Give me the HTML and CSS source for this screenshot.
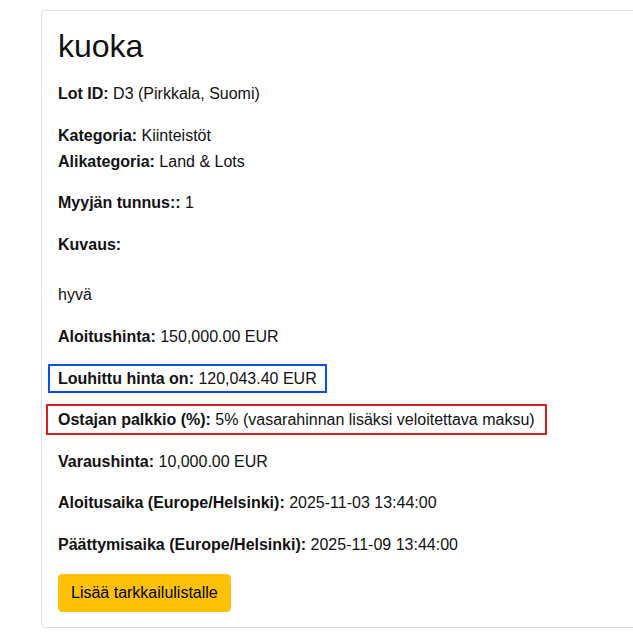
FILE: index.html
```html
<!DOCTYPE html>
<html lang="fi">
  <head>
    <meta charset="UTF-8" />
    <meta name="viewport" content="width=device-width, initial-scale=1.0" />
    <title>kuoka</title>
    <link rel="stylesheet" href="styles.css">
  </head>
  <body>
    <div class="page">
      <div class="lot-card">
        <h1 class="lot-title">kuoka</h1>

        <p><strong>Lot ID:</strong> D3 (Pirkkala, Suomi)</p>

        <p>
          <strong>Kategoria:</strong> Kiinteistöt<br />
          <strong>Alikategoria:</strong> Land &amp; Lots
        </p>

        <p><strong>Myyjän tunnus::</strong> 1</p>

        <p><strong>Kuvaus:</strong></p>
        <div class="description">
          <p>hyvä</p>
        </div>

        <p><strong>Aloitushinta:</strong> 150,000.00 EUR</p>

        <p>
          <span class="hammer-price"><strong>Louhittu hinta on:</strong> 120,043.40 EUR</span>
        </p>

        <p>
          <span class="buyer-fee"><strong>Ostajan palkkio (%):</strong> 5% (vasarahinnan lisäksi veloitettava maksu)</span>
        </p>

        <p><strong>Varaushinta:</strong> 10,000.00 EUR</p>

        <p><strong>Aloitusaika (Europe/Helsinki):</strong> 2025-11-03 13:44:00</p>

        <p><strong>Päättymisaika (Europe/Helsinki):</strong> 2025-11-09 13:44:00</p>

        <button class="watch-btn" type="button">Lisää tarkkailulistalle</button>
      </div>
    </div>
  </body>
</html>
```

FILE: styles.css
```css
html,
body {
  margin: 0;
  overflow: hidden;
}

body {
  font-family: "Liberation Sans", Arial, Helvetica, sans-serif;
  font-size: 16px;
  line-height: 1.6;
  color: #111;
  background: #fff;
}

.page {
  padding: 10px 0 0 41px;
}

.lot-card {
  width: 700px;
  padding: 16px 16px 15px;
  border: 1px solid #dee2e6;
  border-radius: 4px;
}

.lot-title {
  margin: 0 0 16px;
  font-size: 32px;
  font-weight: 400;
  line-height: 1.2;
}

p {
  margin: 0 0 16px;
}

strong {
  font-weight: 700;
}

.description {
  padding-top: 9px;
}

.hammer-price {
  margin-left: -10px;
  padding: 4px 8px;
  border: 2px solid #0a52de;
}

.buyer-fee {
  margin-left: -12px;
  padding: 5px 10px;
  border: 2px solid #dc1f26;
}

.watch-btn {
  padding: 6px 12px;
  font-family: inherit;
  font-size: 16px;
  line-height: 1.5;
  color: #000;
  background-color: #ffc107;
  border: 1px solid #ffc107;
  border-radius: 4px;
  cursor: pointer;
}
```
